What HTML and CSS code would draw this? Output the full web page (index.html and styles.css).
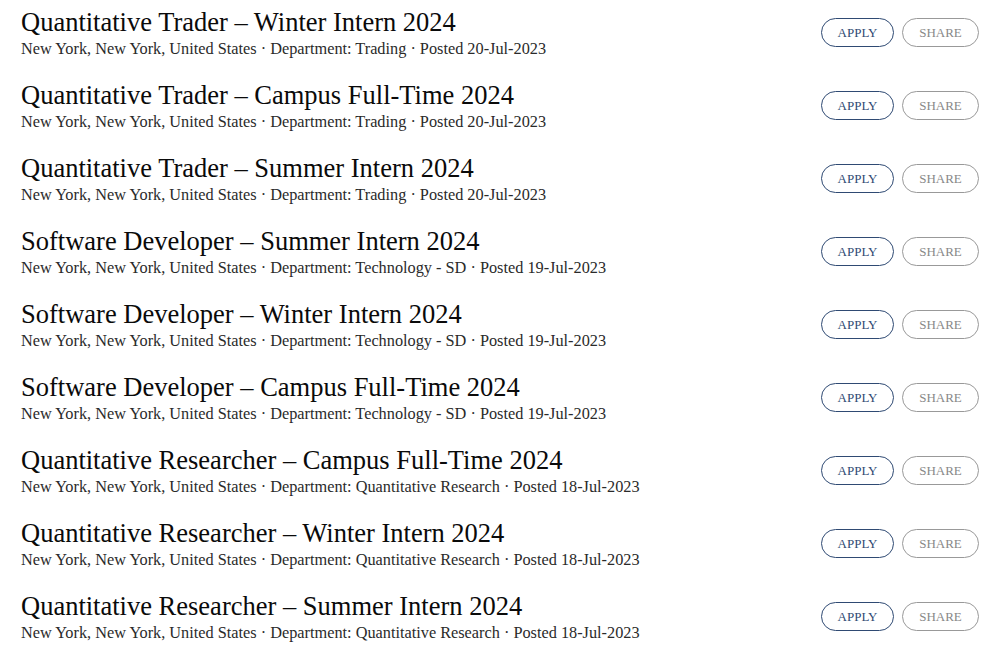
FILE: index.html
```html
<!DOCTYPE html>
<html>
<head>
    <title>Careers</title>
    <link rel="stylesheet" href="styles.css">
</head>
<body>
    <ul class="job-list">
        <li class="job">
            <div class="job-info">
                <h3 class="job-title">Quantitative Trader – Winter Intern 2024</h3>
                <p class="job-meta">New York, New York, United States · Department: Trading · Posted 20-Jul-2023</p>
            </div>
            <div class="job-actions">
                <button class="btn btn-apply">APPLY</button>
                <button class="btn btn-share">SHARE</button>
            </div>
        </li>
        <li class="job">
            <div class="job-info">
                <h3 class="job-title">Quantitative Trader – Campus Full-Time 2024</h3>
                <p class="job-meta">New York, New York, United States · Department: Trading · Posted 20-Jul-2023</p>
            </div>
            <div class="job-actions">
                <button class="btn btn-apply">APPLY</button>
                <button class="btn btn-share">SHARE</button>
            </div>
        </li>
        <li class="job">
            <div class="job-info">
                <h3 class="job-title">Quantitative Trader – Summer Intern 2024</h3>
                <p class="job-meta">New York, New York, United States · Department: Trading · Posted 20-Jul-2023</p>
            </div>
            <div class="job-actions">
                <button class="btn btn-apply">APPLY</button>
                <button class="btn btn-share">SHARE</button>
            </div>
        </li>
        <li class="job">
            <div class="job-info">
                <h3 class="job-title">Software Developer – Summer Intern 2024</h3>
                <p class="job-meta">New York, New York, United States · Department: Technology - SD · Posted 19-Jul-2023</p>
            </div>
            <div class="job-actions">
                <button class="btn btn-apply">APPLY</button>
                <button class="btn btn-share">SHARE</button>
            </div>
        </li>
        <li class="job">
            <div class="job-info">
                <h3 class="job-title">Software Developer – Winter Intern 2024</h3>
                <p class="job-meta">New York, New York, United States · Department: Technology - SD · Posted 19-Jul-2023</p>
            </div>
            <div class="job-actions">
                <button class="btn btn-apply">APPLY</button>
                <button class="btn btn-share">SHARE</button>
            </div>
        </li>
        <li class="job">
            <div class="job-info">
                <h3 class="job-title">Software Developer – Campus Full-Time 2024</h3>
                <p class="job-meta">New York, New York, United States · Department: Technology - SD · Posted 19-Jul-2023</p>
            </div>
            <div class="job-actions">
                <button class="btn btn-apply">APPLY</button>
                <button class="btn btn-share">SHARE</button>
            </div>
        </li>
        <li class="job">
            <div class="job-info">
                <h3 class="job-title">Quantitative Researcher – Campus Full-Time 2024</h3>
                <p class="job-meta">New York, New York, United States · Department: Quantitative Research · Posted 18-Jul-2023</p>
            </div>
            <div class="job-actions">
                <button class="btn btn-apply">APPLY</button>
                <button class="btn btn-share">SHARE</button>
            </div>
        </li>
        <li class="job">
            <div class="job-info">
                <h3 class="job-title">Quantitative Researcher – Winter Intern 2024</h3>
                <p class="job-meta">New York, New York, United States · Department: Quantitative Research · Posted 18-Jul-2023</p>
            </div>
            <div class="job-actions">
                <button class="btn btn-apply">APPLY</button>
                <button class="btn btn-share">SHARE</button>
            </div>
        </li>
        <li class="job">
            <div class="job-info">
                <h3 class="job-title">Quantitative Researcher – Summer Intern 2024</h3>
                <p class="job-meta">New York, New York, United States · Department: Quantitative Research · Posted 18-Jul-2023</p>
            </div>
            <div class="job-actions">
                <button class="btn btn-apply">APPLY</button>
                <button class="btn btn-share">SHARE</button>
            </div>
        </li>
    </ul>
</body>
</html>
```

FILE: styles.css
```css
body {
    font-family: "Liberation Serif", serif;
    margin: 0;
    background: #fff;
    color: #111;
}

.job-list {
    list-style: none;
    margin: 0;
    padding: 8px 9px 0 21px;
}

.job {
    display: flex;
    align-items: center;
    justify-content: space-between;
    height: 73px;
    box-sizing: border-box;
    padding-bottom: 22px;
}

.job-title {
    font-size: 26.5px;
    font-weight: normal;
    line-height: 28px;
    margin: 0;
    color: #0a0a0a;
}

.job-meta {
    font-size: 16.3px;
    line-height: 20px;
    margin: 3px 0 0;
    color: #2a2a2a;
}

.job-actions {
    display: flex;
    gap: 8px;
    margin-bottom: 2px;
}

.btn {
    font-family: "Liberation Serif", serif;
    font-size: 13px;
    background: #fff;
    height: 29px;
    border-radius: 15px;
    padding: 0;
    cursor: pointer;
}

.btn-apply {
    width: 73px;
    border: 1px solid #2f4a73;
    color: #2f4a73;
}

.btn-share {
    width: 77px;
    border: 1px solid #999;
    color: #888;
}
```
